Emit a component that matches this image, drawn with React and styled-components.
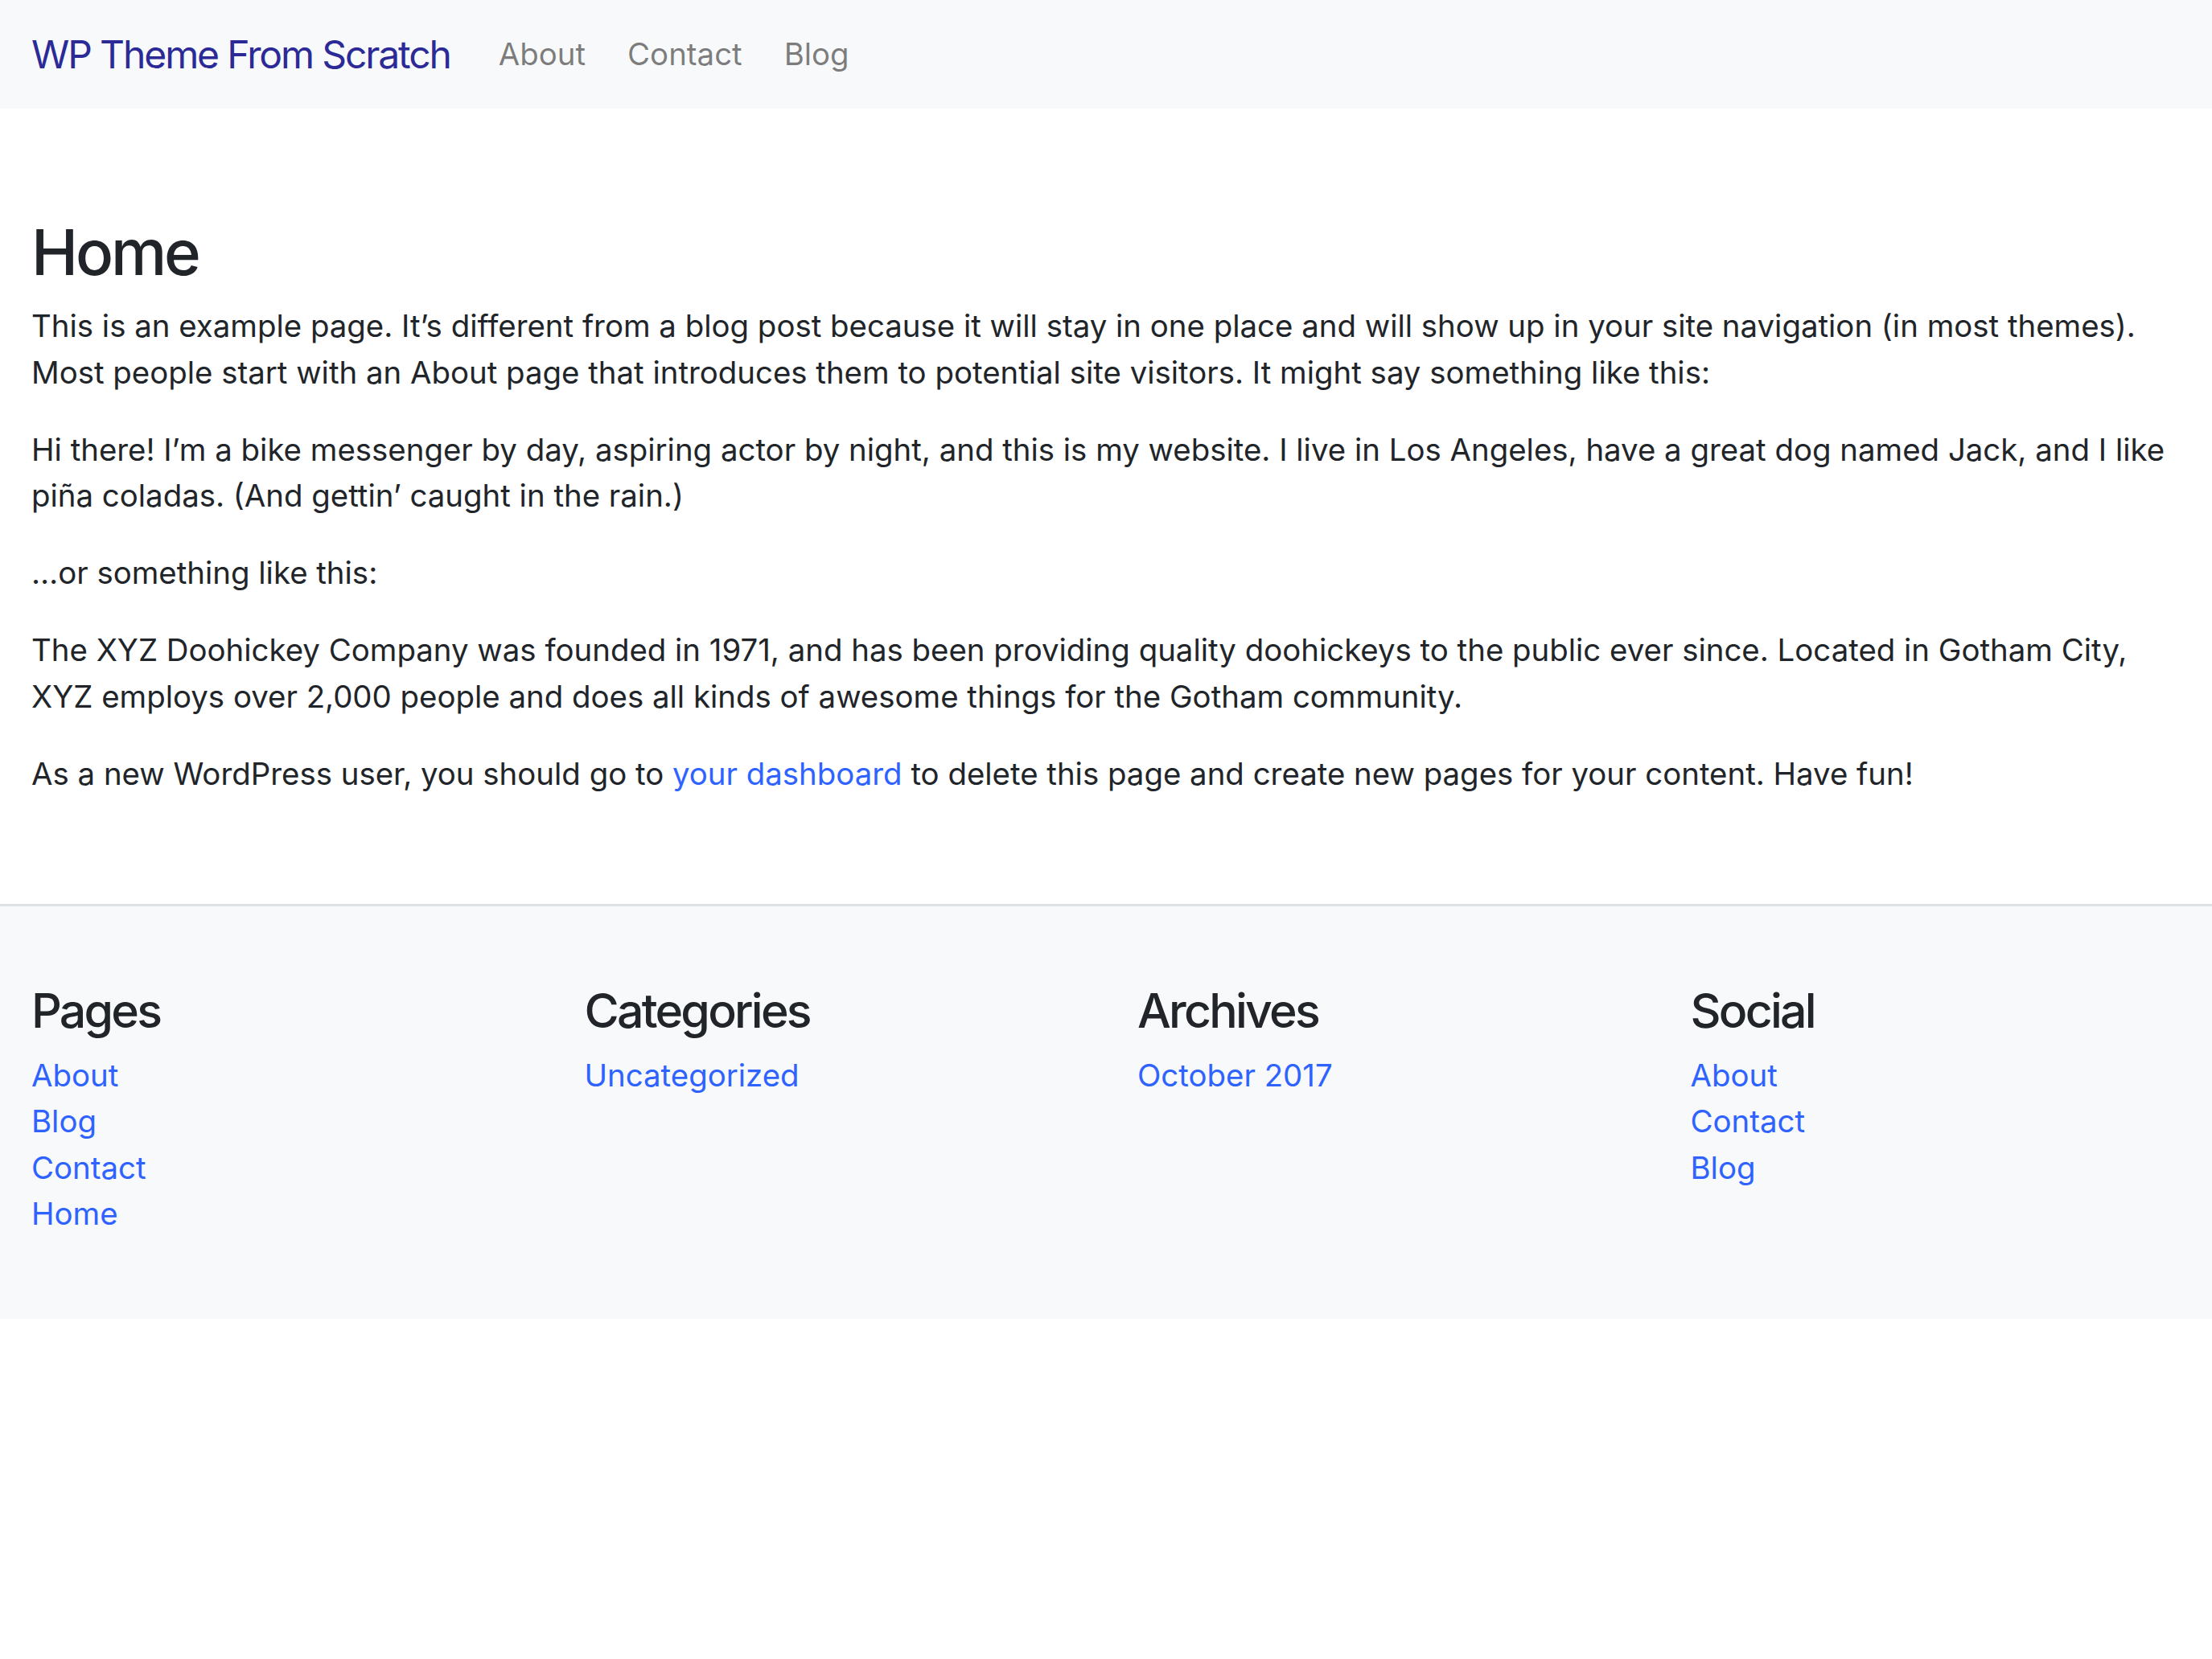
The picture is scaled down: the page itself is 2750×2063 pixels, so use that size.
import React from 'react';
import styled, { createGlobalStyle } from 'styled-components';

const GlobalStyle = createGlobalStyle`
  html, body {
    margin: 0;
    padding: 0;
    background: #fff;
  }
  body {
    font-family: Inter, "Liberation Sans", sans-serif;
    font-size: 38.4px;
    line-height: 57.6px;
    color: #212529;
  }
`;

const Navbar = styled.nav`
  display: flex;
  align-items: center;
  height: 135px;
  padding: 0 39px;
  background: #f8f9fa;
`;

const Brand = styled.a`
  font-size: 48px;
  color: #2b2a96;
  text-decoration: none;
  letter-spacing: -0.044em;
  margin-right: 60px;
`;

const NavList = styled.ul`
  display: flex;
  gap: 52px;
  list-style: none;
  margin: 0;
  padding: 0;
`;

const NavLink = styled.a`
  color: rgba(0, 0, 0, 0.5);
  text-decoration: none;
`;

const Main = styled.main`
  padding: 132px 39px 94px;
`;

const Title = styled.h1`
  font-size: 78px;
  font-weight: 500;
  line-height: 94px;
  margin: 0 0 16px;
  letter-spacing: -0.04em;
`;

const Paragraph = styled.p`
  margin: 0 0 38.4px;
`;

const Link = styled.a`
  color: #2f63ff;
  text-decoration: none;
`;

const Footer = styled.footer`
  display: grid;
  grid-template-columns: repeat(4, 1fr);
  background: #f8f9fa;
  border-top: 3px solid #dee2e6;
  padding: 94px 0 101px;
`;

const Column = styled.section`
  padding: 0 39px;
`;

const ColumnTitle = styled.h3`
  font-size: 59px;
  font-weight: 500;
  line-height: 71px;
  margin: 0 0 17px;
  letter-spacing: -0.047em;
`;

const LinkList = styled.ul`
  list-style: none;
  margin: 0;
  padding: 0;
`;

const footerColumns = [
  { title: 'Pages', links: ['About', 'Blog', 'Contact', 'Home'] },
  { title: 'Categories', links: ['Uncategorized'] },
  { title: 'Archives', links: ['October 2017'] },
  { title: 'Social', links: ['About', 'Contact', 'Blog'] },
];

const App = () => (
  <>
    <GlobalStyle />
    <Navbar>
      <Brand href="#">WP Theme From Scratch</Brand>
      <NavList>
        {['About', 'Contact', 'Blog'].map((item) => (
          <li key={item}>
            <NavLink href="#">{item}</NavLink>
          </li>
        ))}
      </NavList>
    </Navbar>

    <Main>
      <Title>Home</Title>
      <Paragraph>
        This is an example page. It’s different from a blog post because it will stay in one place and will show up in your site navigation (in most themes). Most people start with an About page that introduces them to potential site visitors. It might say something like this:
      </Paragraph>
      <Paragraph>
        Hi there! I’m a bike messenger by day, aspiring actor by night, and this is my website. I live in Los Angeles, have a great dog named Jack, and I like piña coladas. (And gettin’ caught in the rain.)
      </Paragraph>
      <Paragraph>…or something like this:</Paragraph>
      <Paragraph>
        The XYZ Doohickey Company was founded in 1971, and has been providing quality doohickeys to the public ever since. Located in Gotham City, XYZ employs over 2,000 people and does all kinds of awesome things for the Gotham community.
      </Paragraph>
      <Paragraph>
        As a new WordPress user, you should go to <Link href="#">your dashboard</Link> to delete this page and create new pages for your content. Have fun!
      </Paragraph>
    </Main>

    <Footer>
      {footerColumns.map((col) => (
        <Column key={col.title}>
          <ColumnTitle>{col.title}</ColumnTitle>
          <LinkList>
            {col.links.map((link) => (
              <li key={link}>
                <Link href="#">{link}</Link>
              </li>
            ))}
          </LinkList>
        </Column>
      ))}
    </Footer>
  </>
);

export default App;
